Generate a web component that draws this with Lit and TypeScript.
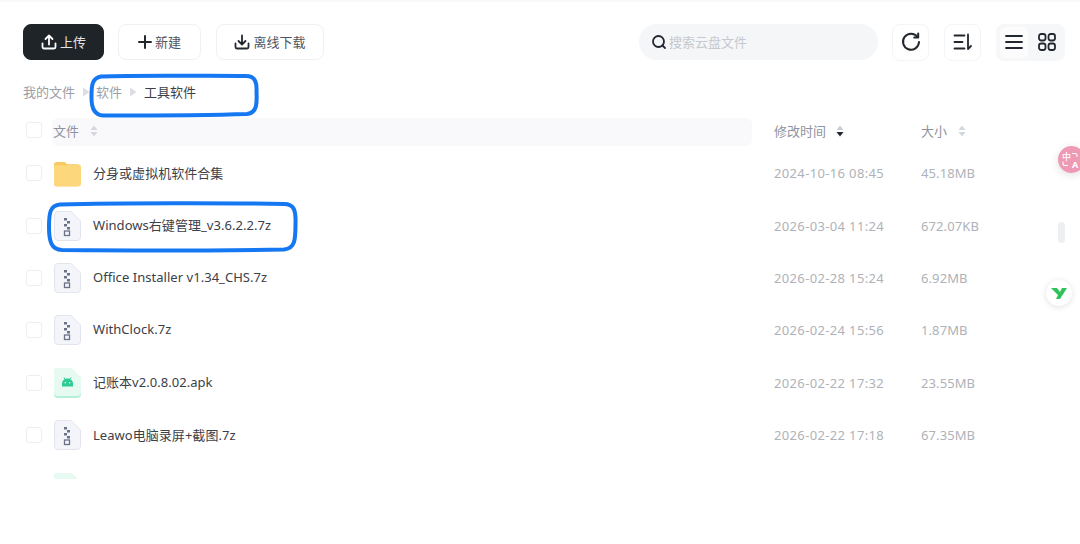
import { LitElement, html, css, svg } from "lit";
import { customElement } from "lit/decorators.js";

const FILES = [
  { n: "分身或虚拟机软件合集", d: "2024-10-16 08:45", s: "45.18MB", t: "folder" },
  { n: "Windows右键管理_v3.6.2.2.7z", d: "2026-03-04 11:24", s: "672.07KB", t: "zip" },
  { n: "Office Installer v1.34_CHS.7z", d: "2026-02-28 15:24", s: "6.92MB", t: "zip" },
  { n: "WithClock.7z", d: "2026-02-24 15:56", s: "1.87MB", t: "zip" },
  { n: "记账本v2.0.8.02.apk", d: "2026-02-22 17:32", s: "23.55MB", t: "apk" },
  { n: "Leawo电脑录屏+截图.7z", d: "2026-02-22 17:18", s: "67.35MB", t: "zip" },
  { n: "", d: "", s: "", t: "apk" },
];

const folder = svg`<svg width="28" height="28" viewBox="0 0 28 28"><path d="M0 5.500a3 3 0 0 1 3-3h7c1.200 0 1.800.6 2.600 1.500l1 1h10.400a4 4 0 0 1 4 4v15a4 4 0 0 1-4 4H3a3 3 0 0 1-3-3z" fill="#f8c95f"/><path d="M0 8a2 2 0 0 1 2-2h24a2 2 0 0 1 2 2v16a3.500 3.500 0 0 1-3.500 3.500h-21A3.500 3.500 0 0 1 0 24z" fill="#fcd77c"/></svg>`;
const zip = svg`<svg width="27" height="30" viewBox="0 0 27 30"><path d="M4 .5h13L26.500 10v16a3.500 3.500 0 0 1-3.500 3.500H4A3.500 3.500 0 0 1 .5 26V4A3.500 3.500 0 0 1 4 .5z" fill="#f4f5fa" stroke="#e3e5ee"/><g fill="#6b7287"><rect x="10" y="7" width="3" height="2.500"/><rect x="13" y="10" width="3" height="2.500"/><rect x="10" y="13" width="3" height="2.500"/><rect x="13" y="16" width="3" height="2.500"/></g><rect x="10.500" y="20" width="5" height="4.500" fill="none" stroke="#6b7287" stroke-width="1.300"/></svg>`;
const apk = svg`<svg width="27" height="30" viewBox="0 0 27 30"><path d="M4 0h13l10 10v16a4 4 0 0 1-4 4H4a4 4 0 0 1-4-4V4a4 4 0 0 1 4-4z" fill="#b5efd9"/><path d="M4 0h13l10 10v14a4 4 0 0 1-4 4H4a4 4 0 0 1-4-4V4a4 4 0 0 1 4-4z" fill="#e6faf2"/><path d="M8 18.500v-3a5.500 5 0 0 1 11 0v3z" fill="#2ecb94"/><path d="M10 9.500l1.500 2.500M17 9.500L15.500 12" stroke="#2ecb94" stroke-width="1"/><circle cx="11.300" cy="14.800" r=".8" fill="#e6faf2"/><circle cx="15.700" cy="14.800" r=".8" fill="#e6faf2"/></svg>`;

const ICON: Record<string, unknown> = { folder, zip, apk };

const sorter = (active = false) => html`<svg class="sorter" width="8" height="12" viewBox="0 0 8 12">
  <path d="M4 .5L7.500 5H.5z" fill="${active ? "#c9ccd6" : "#d5d7e0"}"/>
  <path d="M4 11.500L.5 7h7z" fill="${active ? "#23272e" : "#d5d7e0"}"/></svg>`;

const caret = html`<svg class="caret" width="7" height="10" viewBox="0 0 7 10"><path d="M0 .5l6.500 4.500L0 9.500z" fill="#dcdee3"/></svg>`;

@customElement("app-root")
export class AppRoot extends LitElement {
  static styles = css`
    :host {
      display: block;
      position: relative;
      width: 1080px;
      height: 544px;
      overflow: hidden;
      background: #fff;
      font-family: "Noto Sans", "Noto Sans CJK SC", sans-serif;
      font-size: 13px;
      color: #3b4049;
    }
    .strip { height: 2px; background: #f8f9fa; }
    .t { display: block; padding-bottom: 2px; }
    .toolbar {
      display: flex;
      align-items: center;
      padding: 22px 15px 0 23px;
      height: 36px;
    }
    .btn {
      display: flex;
      align-items: center;
      justify-content: center;
      gap: 3px;
      height: 36px;
      box-sizing: border-box;
      border: 1px solid #f0f1f3;
      border-radius: 8px;
      color: #50555e;
      background: #fff;
    }
    .upload { width: 81px; background: #1f2429; border-color: #1f2429; color: #e2e3e5; margin-right: 14px; }
    .new { width: 83px; margin-right: 15px; }
    .offline { width: 108px; }
    .search {
      margin-left: auto;
      width: 239px;
      height: 36px;
      box-sizing: border-box;
      padding-left: 12px;
      display: flex;
      align-items: center;
      gap: 2px;
      border-radius: 18px;
      background: #f4f6f8;
      color: #c6c9cf;
    }
    .square {
      width: 37px;
      height: 37px;
      box-sizing: border-box;
      display: flex;
      align-items: center;
      justify-content: center;
      border: 1px solid #f3f4f6;
      border-radius: 8px;
      margin-left: 15px;
    }
    .sq1 { margin-left: 14px; }
    .switch {
      margin-left: 15px;
      width: 69px;
      height: 37px;
      box-sizing: border-box;
      padding: 3px 0 3px 4px;
      display: flex;
      align-items: center;
      border-radius: 8px;
      background: #f6f7f9;
    }
    .switch span { width: 37px; height: 31px; display: flex; align-items: center; justify-content: center; border-radius: 6px; }
    .switch .on { width: 28px; background: #fcfcfd; }
    .crumbs {
      display: flex;
      align-items: center;
      height: 20px;
      margin: 22px 0 0 23px;
      color: #9a9ea6;
    }
    .caret { margin: 0 7px 0 8px; }
    .crumbs .last { color: #3b4049; }
    .crumbs .sec { margin-left: -1px; }
    .head {
      display: grid;
      grid-template-columns: 54px 27px 12px 681px 147px 1fr;
      align-items: center;
      height: 28px;
      margin-top: 16px;
      color: #8f93a0;
    }
    .head .t { padding-bottom: 4px; }
    .row {
      display: grid;
      grid-template-columns: 54px 27px 12px 681px 147px 1fr;
      align-items: center;
      height: 52.4px;
    }
    .cb {
      grid-column: 1;
      margin-left: 26px;
      width: 16px;
      height: 16px;
      box-sizing: border-box;
      border: 1px solid #eceef1;
      border-radius: 3px;
      background: #fff;
    }
    .head .cb { margin-bottom: 4px; }
    .hname {
      grid-column: 2 / 5;
      margin-left: -2px;
      margin-right: 22px;
      height: 28px;
      display: flex;
      align-items: center;
      gap: 11px;
      padding-left: 1px;
      border-radius: 6px;
      background: #f9f9fb;
    }
    .htime { display: flex; align-items: center; gap: 10px; }
    .hsize { display: flex; align-items: center; gap: 11px; }
    .sorter { margin-bottom: 2px; }
    .list { height: 332px; overflow: hidden; margin-top: 1px; }
    .ic { grid-column: 2; display: flex; align-items: center; }
    .name { grid-column: 4; color: #3b4049; white-space: nowrap; padding-bottom: 2px; letter-spacing: 0.04px; }
    .date { color: #afb2b8; letter-spacing: 0.35px; }
    .size { color: #afb2b8; letter-spacing: 0.1px; }
    .note { position: absolute; left: 0; top: 0; overflow: visible; fill: none; stroke: #1677f2; stroke-width: 4; stroke-linecap: round; }
    .bubble {
      position: absolute;
      display: flex;
      align-items: center;
      justify-content: center;
      border-radius: 50%;
    }
    .tr {
      left: 1058px; top: 146px; width: 27px; height: 27px;
      background: #ee9ab4;
      box-shadow: 0 2px 10px rgba(0, 0, 0, 0.12);
      color: #fff;
      font-size: 9px;
      line-height: 9px;
      font-weight: 700;
    }
    .tr b { position: absolute; left: 4px; top: 6px; font-weight: 500; }
    .tr i { position: absolute; left: 14px; top: 14px; font-style: normal; }
    .tr svg { position: absolute; left: 0; top: 0; }
    .pill { position: absolute; left: 1058px; top: 222px; width: 7px; height: 21px; border-radius: 4px; background: #eeeff0; }
    .yy {
      left: 1046px; top: 280px; width: 26px; height: 26px;
      background: #fff;
      box-shadow: 0 1px 6px rgba(0, 0, 0, 0.12);
    }
  `;

  render() {
    return html`
      <div class="strip"></div>
      <div class="toolbar">
        <div class="btn upload">
          <svg width="16" height="16" viewBox="0 0 16 16" fill="none" stroke="#fff" stroke-width="1.800" stroke-linecap="round" stroke-linejoin="round"><path d="M8 10.500V2M4.500 5L8 1.500 11.500 5M1.500 9.500v3.500a1.500 1.500 0 0 0 1.500 1.500h10a1.500 1.500 0 0 0 1.500-1.500V9.500"/></svg>
          <span class="t">上传</span>
        </div>
        <div class="btn new">
          <svg width="14" height="14" viewBox="0 0 14 14" stroke="#23272e" stroke-width="2" stroke-linecap="round"><path d="M7 1v12M1 7h12"/></svg>
          <span class="t">新建</span>
        </div>
        <div class="btn offline">
          <svg width="16" height="16" viewBox="0 0 16 16" fill="none" stroke="#23272e" stroke-width="1.800" stroke-linecap="round" stroke-linejoin="round"><path d="M8 1.500V10M4.500 7L8 10.500 11.500 7M1.500 9.500v3.500a1.500 1.500 0 0 0 1.500 1.500h10a1.500 1.500 0 0 0 1.500-1.500V9.500"/></svg>
          <span class="t">离线下载</span>
        </div>
        <div class="search">
          <svg width="16" height="16" viewBox="0 0 16 16" fill="none" stroke="#23272e" stroke-width="1.800" stroke-linecap="round"><circle cx="7.500" cy="7.500" r="5.500"/><path d="M11.500 11.500l2.500 2.500"/></svg>
          <span class="t">搜索云盘文件</span>
        </div>
        <div class="square sq1">
          <svg width="20" height="20" viewBox="0 0 20 20" fill="none" stroke="#23272e" stroke-width="2" stroke-linecap="round" stroke-linejoin="round"><path d="M16.500 5A8 8 0 1 0 18 10"/><path d="M17.200 1.500V5.500h-4"/></svg>
        </div>
        <div class="square">
          <svg width="20" height="18" viewBox="0 0 20 18" fill="none" stroke="#23272e" stroke-width="1.800" stroke-linecap="round" stroke-linejoin="round"><path d="M1.500 2.500h10M1.500 9h8M1.500 15.500h10M15 1.500V16l3-3"/></svg>
        </div>
        <div class="switch">
          <span class="on"><svg width="18" height="16" viewBox="0 0 18 16" stroke="#23272e" stroke-width="1.800" stroke-linecap="round"><path d="M1 2h16M1 8h16M1 14h16"/></svg></span>
          <span><svg width="18" height="18" viewBox="0 0 18 18" fill="none" stroke="#23272e" stroke-width="1.800"><rect x="1" y="1" width="6.500" height="6.500" rx="2.200"/><rect x="10.500" y="1" width="6.500" height="6.500" rx="2.200"/><rect x="1" y="10.500" width="6.500" height="6.500" rx="2.200"/><rect x="10.500" y="10.500" width="6.500" height="6.500" rx="2.200"/></svg></span>
        </div>
      </div>
      <div class="crumbs">
        <span class="t">我的文件</span>${caret}<span class="t sec">软件</span>${caret}<span class="t last">工具软件</span>
      </div>
      <div class="head">
        <div class="cb"></div>
        <div class="hname"><span class="t">文件</span>${sorter()}</div>
        <div class="htime"><span class="t">修改时间</span>${sorter(true)}</div>
        <div class="hsize"><span class="t">大小</span>${sorter()}</div>
      </div>
      <div class="list">
        ${FILES.map(
          (f) => html`<div class="row">
            ${f.n ? html`<div class="cb"></div>` : html`<div></div>`}
            <div class="ic">${ICON[f.t]}</div>
            <div class="name">${f.n}</div>
            <div class="date">${f.d}</div>
            <div class="size">${f.s}</div>
          </div>`
        )}
      </div>
      <svg class="note" width="1080" height="544">
        <path d="M101 76.500 C140 75 205 76 246 76 C255 76 257 82 256.500 92 C257 102 257.500 113 247 114 C205 115.500 140 115.500 103 115.500 C94 115 91.500 108 91.500 98 C91.500 88 91 78 101 76.500 Z"/>
        <path d="M60 204.500 C120 203 230 203 284 204 C294 204 296 210 295.500 224 C295.500 240 295 248.500 284 249.500 C220 250.500 120 250.500 62 250 C51 249.500 49 241 49 227 C49 213 50 205.500 60 204.500 Z"/>
      </svg>
      <div class="bubble tr">
        <svg width="27" height="27" viewBox="0 0 27 27" fill="none" stroke="#fff" stroke-width="1.100" stroke-linecap="round"><path d="M14.500 7.500h2.500a2 2 0 0 1 2 2v1M5 16v1.500a2 2 0 0 0 2 2h2.500"/></svg>
        <b>中</b><i>A</i>
      </div>
      <div class="pill"></div>
      <div class="bubble yy">
        <svg width="16" height="12" viewBox="0 0 16 12"><path d="M0 1h6l3 4 2-4h5L9 12H5l2-4z" fill="#2fc25b"/></svg>
      </div>
    `;
  }
}
